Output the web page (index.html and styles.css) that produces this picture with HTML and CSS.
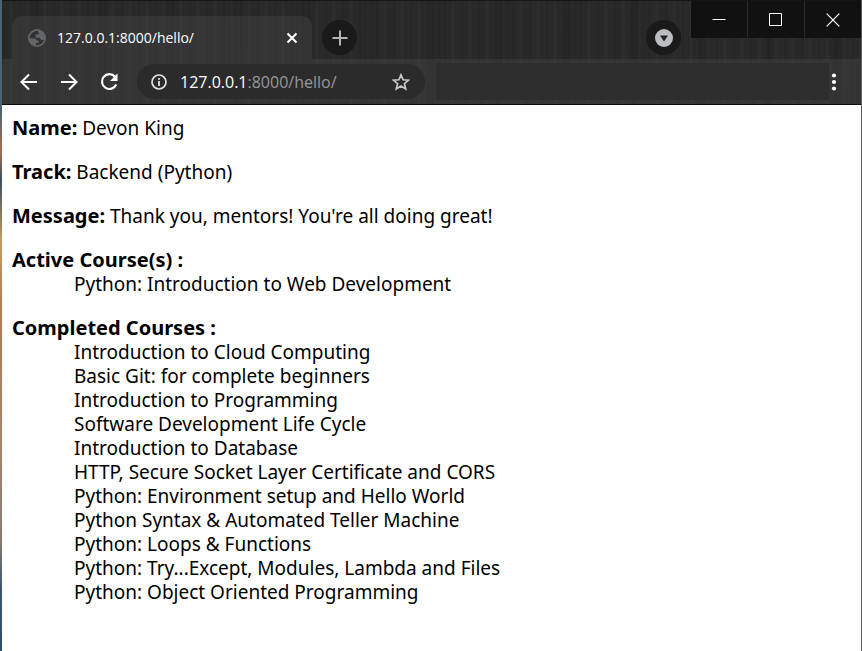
FILE: index.html
```html
<!DOCTYPE html>
<html lang="en">
<head>
<meta charset="utf-8">
<meta name="viewport" content="width=device-width, initial-scale=1">
<title>127.0.0.1:8000/hello/</title>
<link rel="stylesheet" href="styles.css">
</head>
<body>
<div class="window">
  <header class="chrome">
    <div class="tabstrip">
      <div class="tab">
        <svg class="globe" viewBox="0 0 18 18" aria-hidden="true"><circle cx="9" cy="9" r="9" fill="#62666a"/><path d="M10 1.800C7 2 5 3 3.500 4.500 2 6 1.700 8 1.800 9.500H6.500C8 9.500 8.500 10.500 8.500 11.500H10.500V14H8V16.200C12 16.500 15.500 14 16.200 10.500H14C12.500 10.500 12 9.500 12 8.500H8V6H10C11 6 11.200 5 11.200 4.200Z" fill="#333"/><path d="M10 1.800 11.200 4.200C11.200 5.500 10.500 6 9.500 6H8V8H12C12.500 9.500 13 10.500 14 10.500H16.500" fill="none" stroke="#62666a"/></svg>
        <span class="tab-title">127.0.0.1:8000/hello/</span>
        <button class="tab-close" aria-label="Close tab"><svg viewBox="0 0 12 12"><path d="M1.500 1.500 10.500 10.500M10.500 1.500 1.500 10.500" stroke="#fff" stroke-width="2"/></svg></button>
      </div>
      <button class="round new-tab" aria-label="New tab"><svg viewBox="0 0 16 16"><path d="M8 .5V15.500M.5 8H15.500" stroke="#b5b7b9" stroke-width="2"/></svg></button>
      <button class="round search-tabs" aria-label="Search tabs"><svg viewBox="0 0 18 18"><circle cx="9" cy="9" r="9" fill="#bcbdbf"/><path d="M5 6.500H13L9 12.500Z" fill="#222"/></svg></button>
      <div class="controls">
        <button aria-label="Minimize"><svg viewBox="0 0 14 14"><path d="M.5 6.500H13.500" stroke="#fff"/></svg></button>
        <button aria-label="Maximize"><svg viewBox="0 0 14 14"><path d="M.5 .5H12.500V12.500H.5Z" fill="none" stroke="#fff"/></svg></button>
        <button aria-label="Close"><svg viewBox="0 0 14 14"><path d="M.7.7 13.300 13.300M13.300.7.7 13.300" stroke="#fff" stroke-width="1.200"/></svg></button>
      </div>
    </div>
    <div class="toolbar">
      <button class="nav" aria-label="Back"><svg viewBox="0 0 20 20"><path d="M18 10H3M10 2.500 2.500 10 10 17.500" fill="none" stroke="#fff" stroke-width="2"/></svg></button>
      <button class="nav" aria-label="Forward"><svg viewBox="0 0 20 20"><path d="M2 10H17M10 2.500 17.500 10 10 17.500" fill="none" stroke="#fff" stroke-width="2"/></svg></button>
      <button class="nav" aria-label="Reload"><svg viewBox="0 0 20 20"><path d="M15.800 4.500A7.400 7.400 0 1 0 17.200 12.500" fill="none" stroke="#fff" stroke-width="2.200"/><path d="M18.500 1.500V9H11Z" fill="#fff"/></svg></button>
      <div class="address">
        <svg class="info" viewBox="0 0 16 16" aria-hidden="true"><circle cx="8" cy="8" r="7" fill="none" stroke="#e2e2e2" stroke-width="1.700"/><path d="M8 7V12M8 4V5.800" stroke="#e2e2e2" stroke-width="1.800"/></svg>
        <span class="url">127.0.0.1<span class="path">:8000/hello/</span></span>
        <button class="star" aria-label="Bookmark this page"><svg viewBox="0 0 18 18"><path d="M9 1.800 11.100 6.800 16.500 7.200 12.400 10.700 13.700 16 9 13.100 4.300 16 5.600 10.700 1.500 7.200 6.900 6.800Z" fill="none" stroke="#c8c8c8" stroke-width="1.700"/></svg></button>
      </div>
      <div class="extensions"></div>
      <button class="menu" aria-label="Menu"><svg viewBox="0 0 6 18"><circle cx="3" cy="2.500" r="2.100" fill="#fff"/><circle cx="3" cy="9" r="2.100" fill="#fff"/><circle cx="3" cy="15.500" r="2.100" fill="#fff"/></svg></button>
    </div>
  </header>
  <main class="page">
    <p><b>Name:</b> Devon King</p>
    <p><b>Track:</b> Backend (Python)</p>
    <p><b>Message:</b> Thank you, mentors! You're all doing great!</p>
    <dl>
      <dt>Active Course(s) :</dt>
      <dd>Python: Introduction to Web Development</dd>
    </dl>
    <dl>
      <dt>Completed Courses :</dt>
      <dd>Introduction to Cloud Computing</dd>
      <dd>Basic Git: for complete beginners</dd>
      <dd>Introduction to Programming</dd>
      <dd>Software Development Life Cycle</dd>
      <dd>Introduction to Database</dd>
      <dd>HTTP, Secure Socket Layer Certificate and CORS</dd>
      <dd>Python: Environment setup and Hello World</dd>
      <dd>Python Syntax &amp; Automated Teller Machine</dd>
      <dd>Python: Loops &amp; Functions</dd>
      <dd>Python: Try...Except, Modules, Lambda and Files</dd>
      <dd>Python: Object Oriented Programming</dd>
    </dl>
  </main>
</div>
</body>
</html>
```
FILE: styles.css
```css
* { box-sizing: border-box; }
body {
  margin: 0;
  background: linear-gradient(#4b6473 0, #4b6473 110px, #a96f4c 150px, #3c4f60 180px, #c79a5c 240px, #b8784a 310px, #a98468 440px, #8a7a72 540px, #3b5670 590px, #2f4d70 100%);
}
button { margin: 0; padding: 0; border: 0; background: none; display: flex; align-items: center; justify-content: center; }
svg { display: block; flex: none; }
.window {
  min-height: 100vh;
  margin-left: 2px;
  border-right: 1px solid #5a5a5a;
  background: #fff;
}
.chrome {
  background:
    repeating-linear-gradient(90deg, rgba(0,0,0,.07) 0 2px, transparent 3px 7px, rgba(255,255,255,.02) 8px 10px, transparent 11px 17px),
    repeating-linear-gradient(91deg, transparent 0 23px, rgba(0,0,0,.1) 31px, transparent 43px 67px),
    #292929;
  border-bottom: 1px solid #0c0c0c;
  font-family: "Open Sans", sans-serif;
}
.tabstrip {
  display: flex;
  align-items: flex-end;
  height: 59px;
  padding-left: 10px;
  border-top: 1px solid #151515;
}
.tab {
  display: flex;
  align-items: center;
  width: 300px;
  height: 43px;
  padding: 0 14px 0 16px;
  border-radius: 10px 10px 0 0;
  background: rgba(72,72,72,.4);
}
.globe { width: 18px; height: 18px; }
.tab-title { flex: 1; margin-left: 11px; color: #fff; font-size: 14px; }
.tab-close svg { width: 12px; height: 12px; }
.round { width: 35px; height: 35px; margin-bottom: 4px; border-radius: 50%; background: #1a1a1a; }
.new-tab { margin-left: 10px; }
.new-tab svg { width: 16px; height: 16px; }
.search-tabs { margin-left: auto; margin-right: 10px; }
.search-tabs svg { width: 18px; height: 18px; }
.controls { display: flex; gap: 1px; align-self: flex-start; background: #2b2b2b; }
.controls button { width: 56px; height: 37px; background: #111; }
.controls svg { width: 14px; height: 14px; }
.toolbar {
  display: flex;
  align-items: center;
  height: 45px;
  padding: 0 24px 0 17px;
  background: rgba(72,72,72,.4);
}
.nav { margin-right: 20px; }
.nav svg { width: 20px; height: 20px; }
.address {
  display: flex;
  align-items: center;
  width: 288px;
  height: 35px;
  margin-left: -2px;
  padding: 0 15px 0 14px;
  border-radius: 18px;
  background: #2b2b2b;
}
.info { width: 16px; height: 16px; }
.url { flex: 1; margin-left: 13px; color: #fff; font-size: 16px; line-height: 24px; }
.path { color: #989898; }
.star svg { width: 18px; height: 18px; }
.extensions { flex: 1; height: 37px; margin-left: 11px; background: #2d2d2d; }
.menu { margin-left: 2px; }
.menu svg { width: 6px; height: 18px; }
.page {
  padding: 11px 10px 20px;
  color: #000;
  font: 19px/24px "Noto Sans", sans-serif;
}
.page p, .page dl { margin: 0 0 20px; }
.page b, .page dt { font-size: 20px; font-weight: 700; }
.page dd { margin: 0 0 0 62px; }
```
